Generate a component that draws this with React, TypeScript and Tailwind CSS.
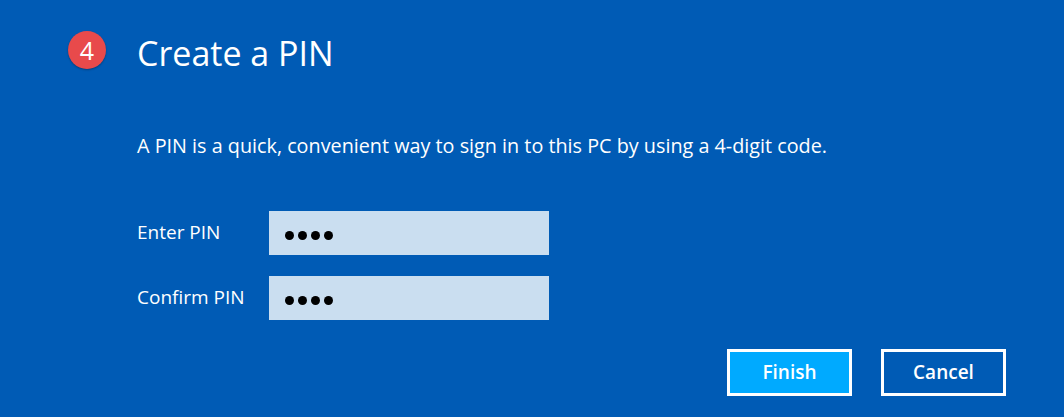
export default function App() {
  const rows = [
    { label: "Enter PIN" },
    { label: "Confirm PIN" },
  ];

  return (
    <div
      className="w-[1064px] h-[417px] bg-[#005bb5] text-white flex flex-col"
      style={{ fontFamily: '"Open Sans", "Noto Sans", sans-serif' }}
    >
      <div className="flex items-center h-[100px] pl-[68px]">
        <div className="w-[38px] h-[38px] rounded-full bg-[#e84a4b] flex items-center justify-center text-[25px] leading-none shadow-[0_1px_2px_rgba(0,0,0,0.3)]">
          4
        </div>
        <h1 className="ml-[31px] text-[34px] font-normal leading-none mt-[6px]">
          Create a PIN
        </h1>
      </div>

      <p className="pl-[137px] mt-[36px] text-[19.8px] leading-[20px]">
        A PIN is a quick, convenient way to sign in to this PC by using a 4-digit code.
      </p>

      <div className="flex flex-col gap-[21px] mt-[55px] pl-[137px]">
        {rows.map((r) => (
          <div key={r.label} className="flex items-center">
            <span className="w-[132px] text-[19px] -mt-[2px]">{r.label}</span>
            <div className="w-[280px] h-[44px] bg-[#cadef0] flex items-center pl-[16px] pt-[4px] gap-[4px]">
              {[0, 1, 2, 3].map((i) => (
                <span key={i} className="w-[9px] h-[9px] rounded-full bg-black" />
              ))}
            </div>
          </div>
        ))}
      </div>

      <div className="flex justify-end gap-[29px] pr-[58px] mt-[29px]">
        <button className="w-[125px] h-[47px] border-[3px] border-white bg-[#00aaff] text-[19px] font-semibold">
          Finish
        </button>
        <button className="w-[125px] h-[47px] border-[3px] border-white bg-[#005bb5] text-[19px] font-semibold">
          Cancel
        </button>
      </div>
    </div>
  );
}
